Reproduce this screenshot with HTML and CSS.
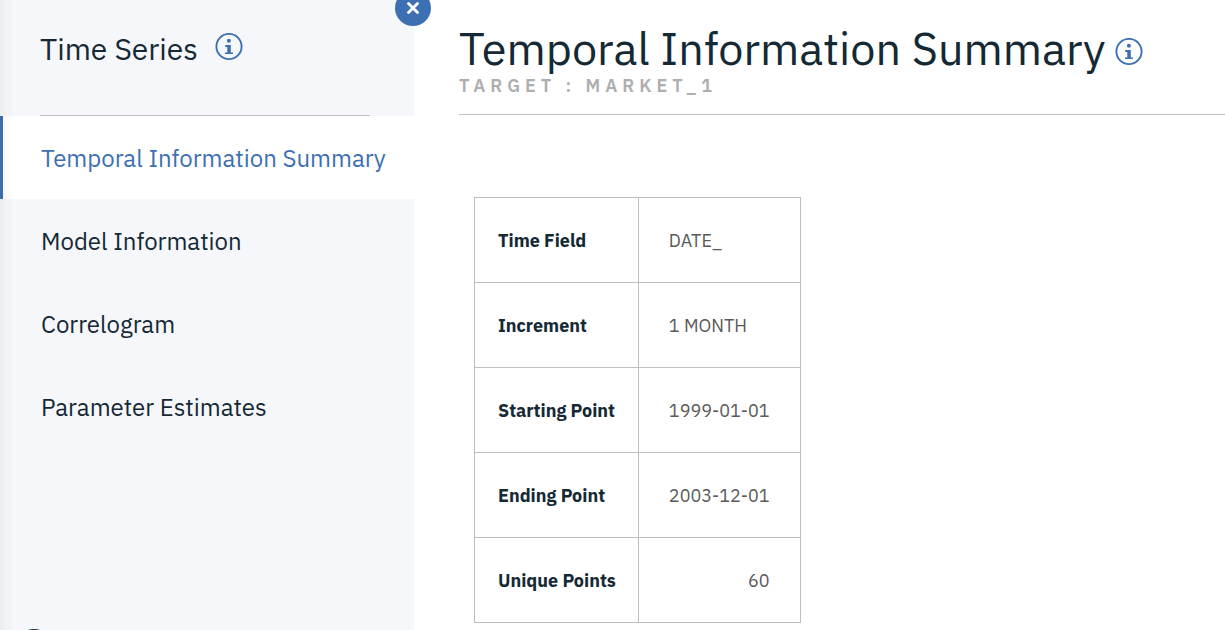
FILE: index.html
```html
<!DOCTYPE html>
<html lang="en">
<head>
<meta charset="utf-8">
<meta name="viewport" content="width=device-width, initial-scale=1">
<title>Time Series</title>
<link rel="stylesheet" href="styles.css">
</head>
<body>
<div class="layout">
  <aside class="sidebar">
    <header class="sidebar-header">
      <h2 class="sidebar-title">Time Series</h2>
      <button class="info" type="button" aria-label="About time series">
        <svg viewBox="0 0 28 28" width="28" height="28" aria-hidden="true"><circle cx="14" cy="13.5" r="12.6" fill="none" stroke="currentColor" stroke-width="1.9"/><circle cx="13.9" cy="7.7" r="2" fill="currentColor"/><path d="M10.2 12h5.6v7.4H18V21h-8v-1.6h2.3V14h-2.1z" fill="currentColor"/></svg>
      </button>
    </header>
    <nav class="nav" aria-label="Output sections">
      <a class="nav-item nav-item-active" href="#temporal" aria-current="page">Temporal Information Summary</a>
      <a class="nav-item" href="#model">Model Information</a>
      <a class="nav-item" href="#correlogram">Correlogram</a>
      <a class="nav-item" href="#parameters">Parameter Estimates</a>
    </nav>
    <button class="close" type="button" aria-label="Close">
      <svg viewBox="0 0 12 12" width="12" height="12" aria-hidden="true"><path d="M1.5 1.5l9 9M10.5 1.5l-9 9" stroke="currentColor" stroke-width="2.8" stroke-linecap="round"/></svg>
    </button>
    <button class="launcher" type="button" aria-label="Open menu"></button>
  </aside>
  <main class="content" id="temporal">
    <header class="content-header">
      <div class="title-row">
        <h1 class="title">Temporal Information Summary</h1>
        <button class="info" type="button" aria-label="About temporal information">
          <svg viewBox="0 0 28 28" width="28" height="28" aria-hidden="true"><circle cx="14" cy="13.5" r="12.6" fill="none" stroke="currentColor" stroke-width="1.9"/><circle cx="13.9" cy="7.7" r="2" fill="currentColor"/><path d="M10.2 12h5.6v7.4H18V21h-8v-1.6h2.3V14h-2.1z" fill="currentColor"/></svg>
        </button>
      </div>
      <p class="subtitle">TARGET : MARKET_1</p>
    </header>
    <table class="summary">
      <tbody>
        <tr><th scope="row">Time Field</th><td>DATE_</td></tr>
        <tr><th scope="row">Increment</th><td>1 MONTH</td></tr>
        <tr><th scope="row">Starting Point</th><td>1999-01-01</td></tr>
        <tr><th scope="row">Ending Point</th><td>2003-12-01</td></tr>
        <tr><th scope="row">Unique Points</th><td class="number">60</td></tr>
      </tbody>
    </table>
  </main>
</div>
</body>
</html>
```
FILE: styles.css
```css
* { box-sizing: border-box; }

body {
  margin: 0;
  background: #fff;
  color: #152935;
  font-family: "IBM Plex Sans", "Noto Sans", sans-serif;
}

h1, h2, p { margin: 0; font-weight: 400; }

button {
  padding: 0;
  border: 0;
  background: none;
  cursor: pointer;
}

.layout { display: flex; height: 100vh; overflow: hidden; }

.sidebar {
  position: relative;
  flex: 0 0 414px;
  background: #f5f7fb;
}

/* Soft shade along the left edge */
.sidebar::before {
  content: "";
  position: absolute;
  z-index: 1;
  inset: 0 auto 0 0;
  width: 14px;
  background: linear-gradient(to right, rgba(0, 0, 0, 0.04), transparent);
  pointer-events: none;
}

.sidebar-header {
  display: flex;
  align-items: flex-start;
  gap: 17px;
  height: 116px;
  margin: 0 44px 0 40px;
  padding-top: 33px;
  border-bottom: 1px solid #c3c3c7;
}

.sidebar-title { font-size: 30px; line-height: 32px; }

.info { display: block; flex: none; color: #3d70b2; }
.info svg { display: block; }

.nav { display: flex; flex-direction: column; }

.nav-item {
  padding: 26px 0 25px 38px;
  border-left: 3px solid transparent;
  color: #152935;
  font-size: 24px;
  line-height: 32px;
  text-decoration: none;
  white-space: nowrap;
}

.nav-item-active {
  border-left-color: #3d70b2;
  background: #fff;
  color: #3d70b2;
}

.close {
  position: absolute;
  z-index: 2;
  top: -10px;
  right: -17px;
  display: grid;
  place-items: center;
  width: 36px;
  height: 36px;
  border-radius: 50%;
  background: #3d70b2;
  color: #fff;
}

.launcher {
  position: absolute;
  bottom: -39px;
  left: 14px;
  width: 40px;
  height: 40px;
  border-radius: 50%;
  background: #1d3649;
}

.content { flex: 1; min-width: 0; padding-left: 45px; }

.content-header {
  height: 115px;
  padding-top: 22px;
  border-bottom: 1px solid #c3c3c3;
}

.title-row { display: flex; align-items: flex-start; gap: 10px; }
.title-row .info { margin-top: 16px; }

.title {
  font-size: 45px;
  line-height: 52px;
  white-space: nowrap;
}

.subtitle {
  margin-top: 2px;
  color: #aeaeae;
  font-size: 18px;
  font-weight: 600;
  letter-spacing: 5px;
  line-height: 20px;
}

.summary {
  margin: 82px 0 0 15px;
  border-collapse: collapse;
  font-size: 18px;
  line-height: 24px;
}

.summary th,
.summary td {
  height: 85px;
  border: 1px solid #bebebe;
  text-align: left;
  white-space: nowrap;
}

.summary th { padding: 2px 22px 0 23px; font-weight: 700; }
.summary td { padding: 2px 30px 0; color: #5a5a5a; font-weight: 400; }
.summary .number { text-align: right; }
```
